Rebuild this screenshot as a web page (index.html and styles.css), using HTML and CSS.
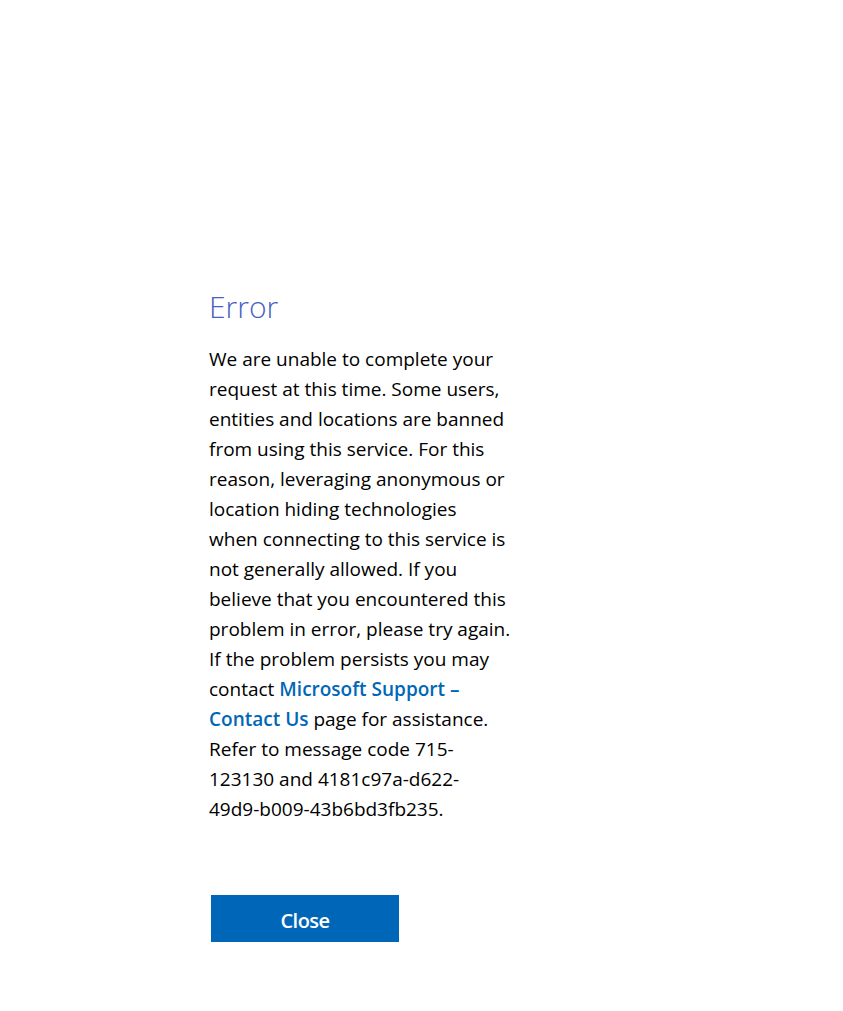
FILE: index.html
```html
<!DOCTYPE html>
<html lang="en">
<head>
  <meta charset="UTF-8" />
  <meta name="viewport" content="width=device-width, initial-scale=1.0"/>
  <title>Error</title>
  <link rel="stylesheet" href="styles.css">
</head>
<body>

<div class="container">
  <h1>Error</h1>

  <p class="message">
    We are unable to complete your request at this time. Some users,
    entities and locations are banned from using this service. For this
    reason, leveraging anonymous or location hiding technologies<br>
    when connecting to this service is not generally allowed. If you believe
    that you encountered this problem in error, please try again. If the
    problem persists you may contact
    <a href="#">Microsoft Support – Contact Us</a> page for assistance.
    Refer to message code 715-123130 and 4181c97a-d622-<br>49d9-b009-43b6bd3fb235.
  </p>

  <!-- Кнопка -->
  <button class="close">Close</button>
</div>

</body>
</html>
```

FILE: styles.css
```css
body {
  font-family: "Open Sans", "Noto Sans", sans-serif;
  margin: 0;
  background-color: #ffffff;
  color: #000000;
}
.container {
  width: 303px;
  margin-left: 209px;
  padding-top: 285px;
}
h1 {
  font-size: 30px;
  font-weight: 300;
  color: #4760c4;
  margin: 0 0 15px 0;
  line-height: 44px;
}
.message {
  font-size: 19px;
  line-height: 30px;
  margin: 0;
}
.message a {
  color: #0067b8;
  font-weight: 600;
  text-decoration: none;
}
.close {
  display: block;
  width: 188px;
  height: 47px;
  margin: 71px 0 0 2px;
  padding: 4px 0 0 0;
  border: none;
  background-color: #0067b8;
  color: #ffffff;
  font-family: inherit;
  font-size: 20px;
  font-weight: 600;
  letter-spacing: -0.5px;
}
```
